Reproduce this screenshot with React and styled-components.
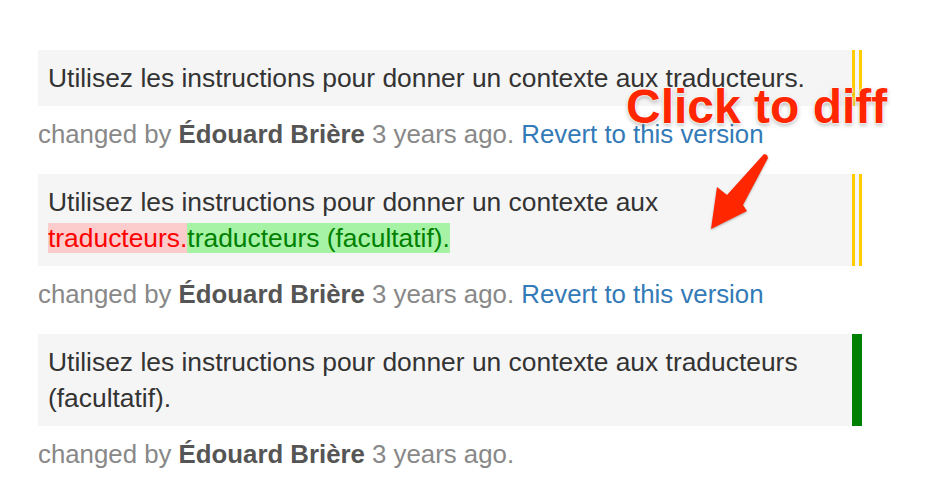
import React from "react";
import styled, { createGlobalStyle } from "styled-components";

const Global = createGlobalStyle`
  body {
    margin: 0;
    background: #fff;
    font-family: "Liberation Sans", Arial, Helvetica, sans-serif;
    color: #333;
  }
`;

const Page = styled.div`
  position: relative;
  width: 950px;
  height: 498px;
  padding: 50px 0 0 38px;
  box-sizing: border-box;
  overflow: hidden;
`;

const History = styled.div`
  width: 824px;
`;

const Version = styled.div`
  margin-bottom: 22px;
`;

const Body = styled.div`
  background: #f5f5f5;
  padding: 10px;
  font-size: 26.4px;
  line-height: 36px;
  color: #333;
  border-right: ${(p) =>
    p.current ? "10px solid #008000" : "10px double #ffcc00"};
`;

const Del = styled.span`
  background: #fccbcb;
  color: #ff0000;
`;

const Ins = styled.span`
  background: #a6f3a6;
  color: #008000;
`;

const Meta = styled.div`
  margin-top: 10px;
  font-size: 25.8px;
  line-height: 36px;
  color: #888;
  b {
    color: #555;
  }
  a {
    color: #337ab7;
    text-decoration: none;
  }
`;

const Callout = styled.div`
  position: absolute;
  left: 626px;
  top: 79px;
  font-size: 48px;
  font-weight: 700;
  color: #ff2600;
  text-shadow: 0 0 2px #fff, 0 0 2px #fff, 0 0 3px #fff, 0 2px 4px rgba(0, 0, 0, 0.35);
  white-space: nowrap;
`;

const Arrow = styled.svg`
  position: absolute;
  left: 700px;
  top: 150px;
  filter: drop-shadow(0 1px 1px rgba(0, 0, 0, 0.3));
`;

const who = (
  <>
    changed by <b>Édouard Brière</b> 3 years ago.
  </>
);

export default function App() {
  return (
    <Page>
      <Global />
      <History>
        <Version>
          <Body>Utilisez les instructions pour donner un contexte aux traducteurs.</Body>
          <Meta>
            {who} <a href="#">Revert to this version</a>
          </Meta>
        </Version>
        <Version>
          <Body>
            Utilisez les instructions pour donner un contexte aux{" "}
            <Del>traducteurs.</Del>
            <Ins>traducteurs (facultatif).</Ins>
          </Body>
          <Meta>
            {who} <a href="#">Revert to this version</a>
          </Meta>
        </Version>
        <Version>
          <Body current>
            Utilisez les instructions pour donner un contexte aux traducteurs (facultatif).
          </Body>
          <Meta>{who}</Meta>
        </Version>
      </History>
      <Callout>Click to diff</Callout>
      <Arrow width="80" height="90" viewBox="0 0 80 90">
        <path
          d="M67 5 L68 8 L43 55 L47 61 L11 79 L17 37 L27 45 L64 4 Z"
          fill="#ff2600"
        />
      </Arrow>
    </Page>
  );
}
